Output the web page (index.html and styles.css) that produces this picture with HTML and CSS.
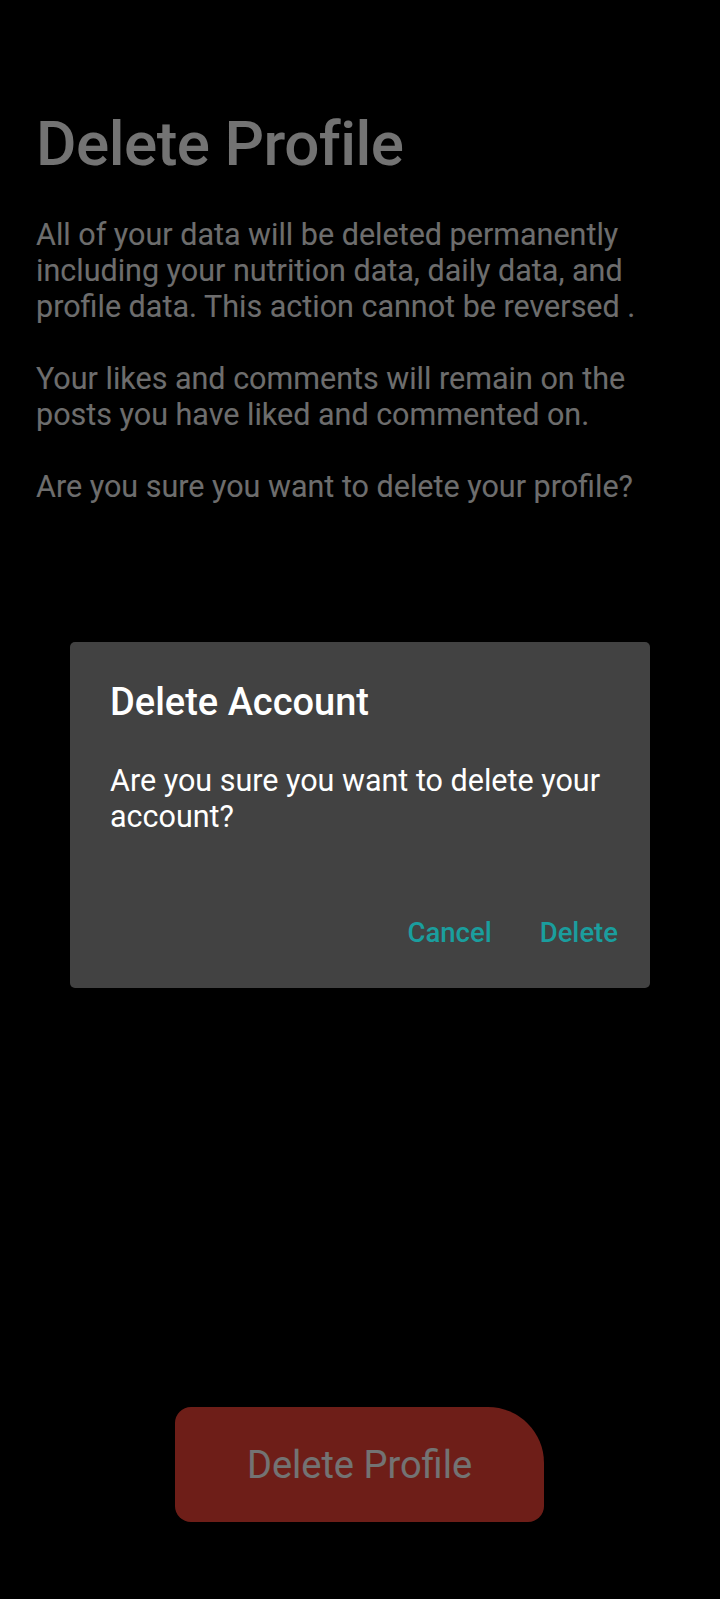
FILE: index.html
```html
<!DOCTYPE html>
<html lang="en">
<head>
  <meta charset="UTF-8" />
  <meta name="viewport" content="width=device-width, initial-scale=1.0" />
  <title>Delete Profile</title>
  <link rel="stylesheet" href="styles.css">
</head>
<body>
  <div class="screen">
    <main class="content">
      <h1>Delete Profile</h1>
      <p>All of your data will be deleted permanently including your nutrition data, daily data, and profile data. This action cannot be reversed .</p>
      <p>Your likes and comments will remain on the posts you have liked and commented on.</p>
      <p>Are you sure you want to delete your profile?</p>
    </main>

    <div class="footer">
      <button class="delete-btn">Delete Profile</button>
    </div>
  </div>

  <div class="scrim">
    <div class="dialog">
      <h2>Delete Account</h2>
      <p>Are you sure you want to delete your account?</p>
      <div class="actions">
        <button>Cancel</button>
        <button>Delete</button>
      </div>
    </div>
  </div>
</body>
</html>
```

FILE: styles.css
```css
body {
  font-family: Roboto, "Noto Sans", sans-serif;
  background-color: #000;
  margin: 0;
  padding: 0;
}
.screen {
  display: flex;
  flex-direction: column;
  height: 1599px;
}
.content {
  flex-grow: 1;
  padding: 107px 26px 0 36px;
}
.content h1 {
  color: #fff;
  font-size: 62px;
  font-weight: 500;
  margin: 0 0 37px;
  letter-spacing: -0.5px;
}
.content p {
  color: #f2f2f2;
  font-size: 30.5px;
  line-height: 36px;
  margin: 0 0 36px;
}
.footer {
  display: flex;
  justify-content: center;
  padding-bottom: 77px;
}
.delete-btn {
  width: 369px;
  height: 115px;
  background-color: #f44336;
  color: #fff;
  border: none;
  border-radius: 16px 56px 16px 16px;
  font-family: inherit;
  font-size: 38px;
  margin-left: -1px;
}
.scrim {
  position: fixed;
  inset: 0;
  background-color: rgba(0, 0, 0, 0.55);
  display: flex;
  justify-content: center;
  align-items: center;
  padding-top: 30px;
}
.dialog {
  width: 580px;
  height: 346px;
  box-sizing: border-box;
  background-color: #424242;
  border-radius: 5px;
  padding: 38px 32px 0 40px;
  display: flex;
  flex-direction: column;
}
.dialog h2 {
  color: #fff;
  font-size: 38px;
  font-weight: 500;
  margin: 0 0 39px;
}
.dialog p {
  color: #fff;
  font-size: 30.5px;
  line-height: 36px;
  margin: 0;
}
.actions {
  margin-top: auto;
  margin-bottom: 39px;
  display: flex;
  justify-content: flex-end;
  gap: 48px;
}
.actions button {
  background: none;
  border: none;
  padding: 0;
  color: #1a9e9e;
  font-family: inherit;
  font-size: 27.5px;
  font-weight: 500;
}
```
